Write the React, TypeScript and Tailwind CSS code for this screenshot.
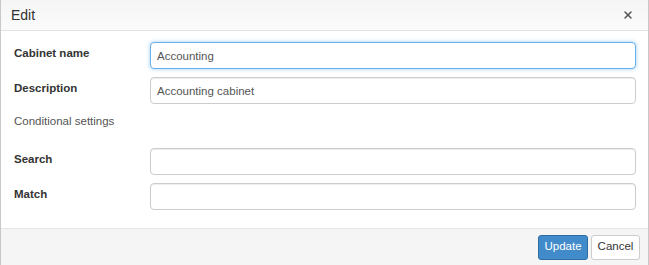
import { X } from 'lucide-react'

const font = { fontFamily: '"Liberation Sans", Arial, sans-serif' }

function Row({ label, value, focused }: { label: string; value?: string; focused?: boolean }) {
  return (
    <div className="flex items-start h-[27px]">
      <label className="w-[136px] shrink-0 pt-[3px] text-[11.5px] leading-[16px] font-bold text-[#333]">{label}</label>
      <input
        readOnly
        value={value ?? ''}
        className={`flex-1 h-[27px] rounded-[4px] border px-[6px] text-[11.5px] text-[#555] bg-white outline-none ${
          focused
            ? 'border-[#66afe9] shadow-[0_0_4px_rgba(102,175,233,0.6)]'
            : 'border-[#ccc] shadow-[inset_0_1px_1px_rgba(0,0,0,0.075)]'
        }`}
      />
    </div>
  )
}

export default function App() {
  return (
    <div style={font} className="w-[649px] h-[265px] bg-white border-x border-[#c8c8c8] flex flex-col overflow-hidden">
      <div className="h-[31px] shrink-0 flex items-center justify-between pl-[10px] pr-[14px] bg-gradient-to-b from-[#f5f5f5] to-[#fbfbfb] border-b border-[#e2e2e2]">
        <span className="text-[14px] text-[#333]">Edit</span>
        <X size={12} strokeWidth={3} className="text-[#555]" />
      </div>
      <div className="flex-1 flex flex-col pt-[11px] pl-[13px] pr-[12px]">
        <Row label="Cabinet name" value="Accounting" focused />
        <div className="h-[8px] shrink-0" />
        <Row label="Description" value="Accounting cabinet" />
        <div className="pt-[9px] h-[44px] shrink-0 text-[11.5px] leading-[16px] text-[#555]">Conditional settings</div>
        <Row label="Search" />
        <div className="h-[8px] shrink-0" />
        <Row label="Match" />
      </div>
      <div className="h-[37px] shrink-0 bg-[#f5f5f5] border-t border-[#e5e5e5] flex items-center justify-end gap-[3px] pr-[8px]">
        <button className="h-[25px] w-[50px] rounded-[3px] border border-[#2e6da4] bg-[#428bca] text-white text-[11.5px]">Update</button>
        <button className="h-[25px] w-[49px] rounded-[3px] border border-[#ccc] bg-white text-[#333] text-[11.5px]">Cancel</button>
      </div>
    </div>
  )
}
